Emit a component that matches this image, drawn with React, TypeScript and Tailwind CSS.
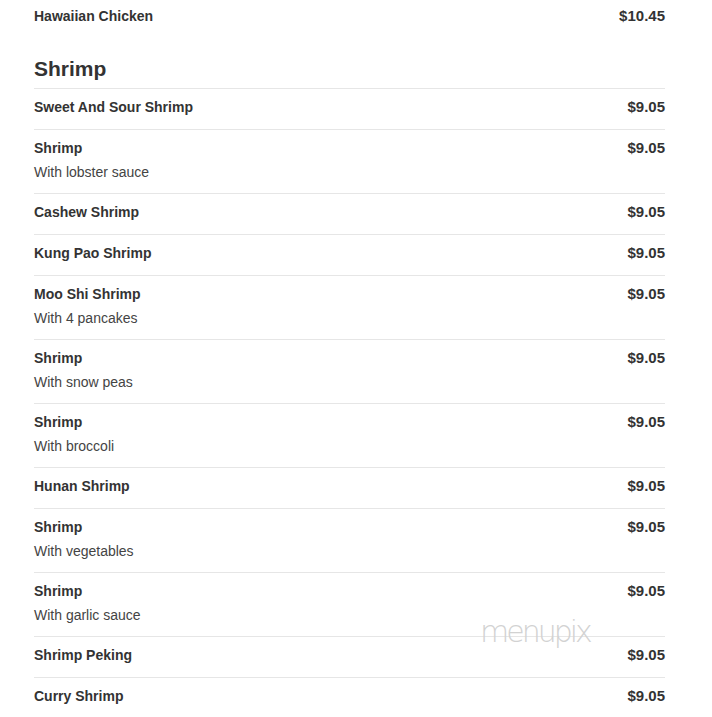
type Item = { name: string; price: string; desc?: string };

const shrimp: Item[] = [
  { name: "Sweet And Sour Shrimp", price: "$9.05" },
  { name: "Shrimp", price: "$9.05", desc: "With lobster sauce" },
  { name: "Cashew Shrimp", price: "$9.05" },
  { name: "Kung Pao Shrimp", price: "$9.05" },
  { name: "Moo Shi Shrimp", price: "$9.05", desc: "With 4 pancakes" },
  { name: "Shrimp", price: "$9.05", desc: "With snow peas" },
  { name: "Shrimp", price: "$9.05", desc: "With broccoli" },
  { name: "Hunan Shrimp", price: "$9.05" },
  { name: "Shrimp", price: "$9.05", desc: "With vegetables" },
  { name: "Shrimp", price: "$9.05", desc: "With garlic sauce" },
  { name: "Shrimp Peking", price: "$9.05" },
  { name: "Curry Shrimp", price: "$9.05" },
];

function Row({ item, border = true }: { item: Item; border?: boolean }) {
  return (
    <div
      className={
        border
          ? "flex justify-between border-t border-[#e6e6e6] pt-[8px] pb-[12px]"
          : "flex justify-between pt-[6px] pb-[12px]"
      }
    >
      <div>
        <div className="text-[14px] leading-[20px] font-bold text-[#333]">{item.name}</div>
        {item.desc && (
          <div className="mt-[5px] text-[14px] leading-[18px] text-[#444]">{item.desc}</div>
        )}
      </div>
      <div className="text-[15px] leading-[20px] font-bold text-[#333]">{item.price}</div>
    </div>
  );
}

export default function App() {
  return (
    <div className="relative h-[717px] w-[712px] overflow-hidden bg-white font-['Liberation_Sans',Arial,sans-serif]">
      <div className="ml-[34px] w-[631px]">
        <Row item={{ name: "Hawaiian Chicken", price: "$10.45" }} border={false} />
        <h2 className="mt-[18px] mb-[6px] text-[21px] leading-[26px] font-bold text-[#333]">Shrimp</h2>
        {shrimp.map((it, i) => (
          <Row key={i} item={it} />
        ))}
      </div>
      <div className="absolute left-[480px] top-[617px] font-['DejaVu_Sans',sans-serif] text-[30px] font-extralight leading-[30px] tracking-[-3px] text-[#d2d2d2]">
        menupix
      </div>
    </div>
  );
}
